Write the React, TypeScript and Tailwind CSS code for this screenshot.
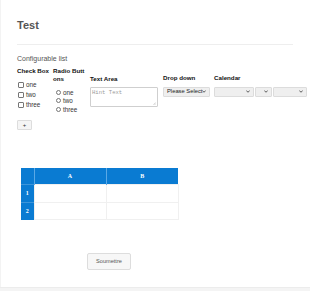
function Chevron() {
  return (
    <svg viewBox="0 0 8 5" className="w-[4px] h-[3px] shrink-0" fill="none">
      <path d="M1 1L4 4L7 1" stroke="#333" strokeWidth="1.6" strokeLinecap="round" strokeLinejoin="round" />
    </svg>
  );
}

function FakeSelect({ w, label }: { w: string; label?: string }) {
  return (
    <div
      className={`${w} h-[9.5px] flex items-center justify-between pl-[3px] pr-[3px] bg-[#efefef] border border-[#dcdcdc] rounded-[1px] text-[5.8px] leading-none text-[#222]`}
    >
      <span className="whitespace-nowrap">{label}</span>
      <Chevron />
    </div>
  );
}

export default function App() {
  const checks = ['one', 'two', 'three'];

  return (
    <div className="w-[310px] h-[291px] overflow-hidden bg-white font-['Liberation_Sans',Arial,sans-serif] text-[#333] flex flex-col">
      <div className="flex-1 border-l border-[#f3f3f3] pl-[16px] pr-[17px] pt-[19px]">
        <h1 className="text-[11px] leading-[13px] font-bold text-[#555]">Test</h1>
        <div className="mt-[12px] h-px bg-[#eeeeee]" />

        <div className="mt-[10px] text-[7px] leading-[8px] text-[#555]">Configurable list</div>

        {/* columns */}
        <div className="mt-[4px] flex items-start">
          <div className="w-[36px] shrink-0">
            <div className="text-[6.2px] leading-[8px] font-bold text-[#111] whitespace-nowrap">Check Box</div>
            <div className="mt-[5px] flex flex-col">
              {checks.map((c) => (
                <label key={c} className="h-[10px] flex items-center gap-[2px] pl-[1px] text-[6.3px] text-[#333]">
                  <span className="w-[6px] h-[6px] border border-[#767676] rounded-[1px] bg-white" />
                  {c}
                </label>
              ))}
            </div>
          </div>

          <div className="w-[37px] shrink-0">
            <div className="w-[33px] text-[6.2px] leading-[8px] font-bold text-[#111] break-all">Radio Buttons</div>
            <div className="mt-[5px] pl-[3px] flex flex-col">
              {checks.map((c) => (
                <label key={c} className="h-[8.6px] flex items-center gap-[2px] text-[6.3px] text-[#333]">
                  <span className="w-[5px] h-[5px] border border-[#767676] rounded-full bg-white" />
                  {c}
                </label>
              ))}
            </div>
          </div>

          <div className="w-[73px] shrink-0 pt-[8px]">
            <div className="text-[6.2px] leading-[8px] font-bold text-[#111] whitespace-nowrap">Text Area</div>
            <div className="relative mt-[4px] w-[68px] h-[19.5px] border border-[#cfcfcf] rounded-[1px] bg-white">
              <span className="absolute left-[1px] top-[2px] font-['Liberation_Mono',monospace] text-[5.6px] leading-[6px] text-[#9a9a9a]">
                Hint Text
              </span>
              <svg viewBox="0 0 6 6" className="absolute right-[1px] bottom-[1px] w-[3px] h-[3px]">
                <path d="M5.5 1L1 5.5M5.5 3.5L3.5 5.5" stroke="#888" strokeWidth="0.8" />
              </svg>
            </div>
          </div>

          <div className="w-[51px] shrink-0 pt-[7px]">
            <div className="text-[6.2px] leading-[8px] font-bold text-[#111] whitespace-nowrap">Drop down</div>
            <div className="mt-[5px]">
              <FakeSelect w="w-[47px]" label="Please Select" />
            </div>
          </div>

          <div className="shrink-0 pt-[7px]">
            <div className="text-[6.2px] leading-[8px] font-bold text-[#111] whitespace-nowrap">Calendar</div>
            <div className="mt-[5px] flex gap-[1px]">
              <FakeSelect w="w-[40px]" />
              <FakeSelect w="w-[17px]" />
              <FakeSelect w="w-[34px]" />
            </div>
          </div>
        </div>

        <button className="mt-[6px] w-[15px] h-[10px] flex items-center justify-center bg-[#f5f5f5] border border-[#dddddd] rounded-[1px] text-[6px] leading-none text-[#333]">
          +
        </button>

        {/* grid */}
        <table className="mt-[38px] ml-[4px] border-collapse font-['Liberation_Serif',serif]">
          <thead>
            <tr className="h-[17px]">
              <th className="w-[13px] p-0 bg-[#0a7bd2] border-r border-[#5aa9e6]" />
              <th className="w-[72px] p-0 bg-[#0a7bd2] border-r border-[#5aa9e6] text-[6px] font-bold text-white">A</th>
              <th className="w-[72px] p-0 bg-[#0a7bd2] text-[6px] font-bold text-white">B</th>
            </tr>
          </thead>
          <tbody>
            {['1', '2'].map((r, i) => (
              <tr key={r} className={i === 0 ? 'h-[18px]' : 'h-[17px]'}>
                <td className="p-0 bg-[#0a7bd2] text-center text-[6px] font-bold text-white border-t border-[#3d95da]">{r}</td>
                <td className="p-0 border border-[#f0f0f0]" />
                <td className="p-0 border border-[#f0f0f0]" />
              </tr>
            ))}
          </tbody>
        </table>

        <button className="mt-[33px] ml-[70px] w-[44px] h-[16.5px] flex items-center justify-center bg-[#f7f7f7] border border-[#dddddd] rounded-[2px] text-[5.6px] leading-none text-[#555]">
          Soumettre
        </button>
      </div>
      <div className="h-[4px] bg-[#f4f4f4] border-t border-[#ececec]" />
    </div>
  );
}
